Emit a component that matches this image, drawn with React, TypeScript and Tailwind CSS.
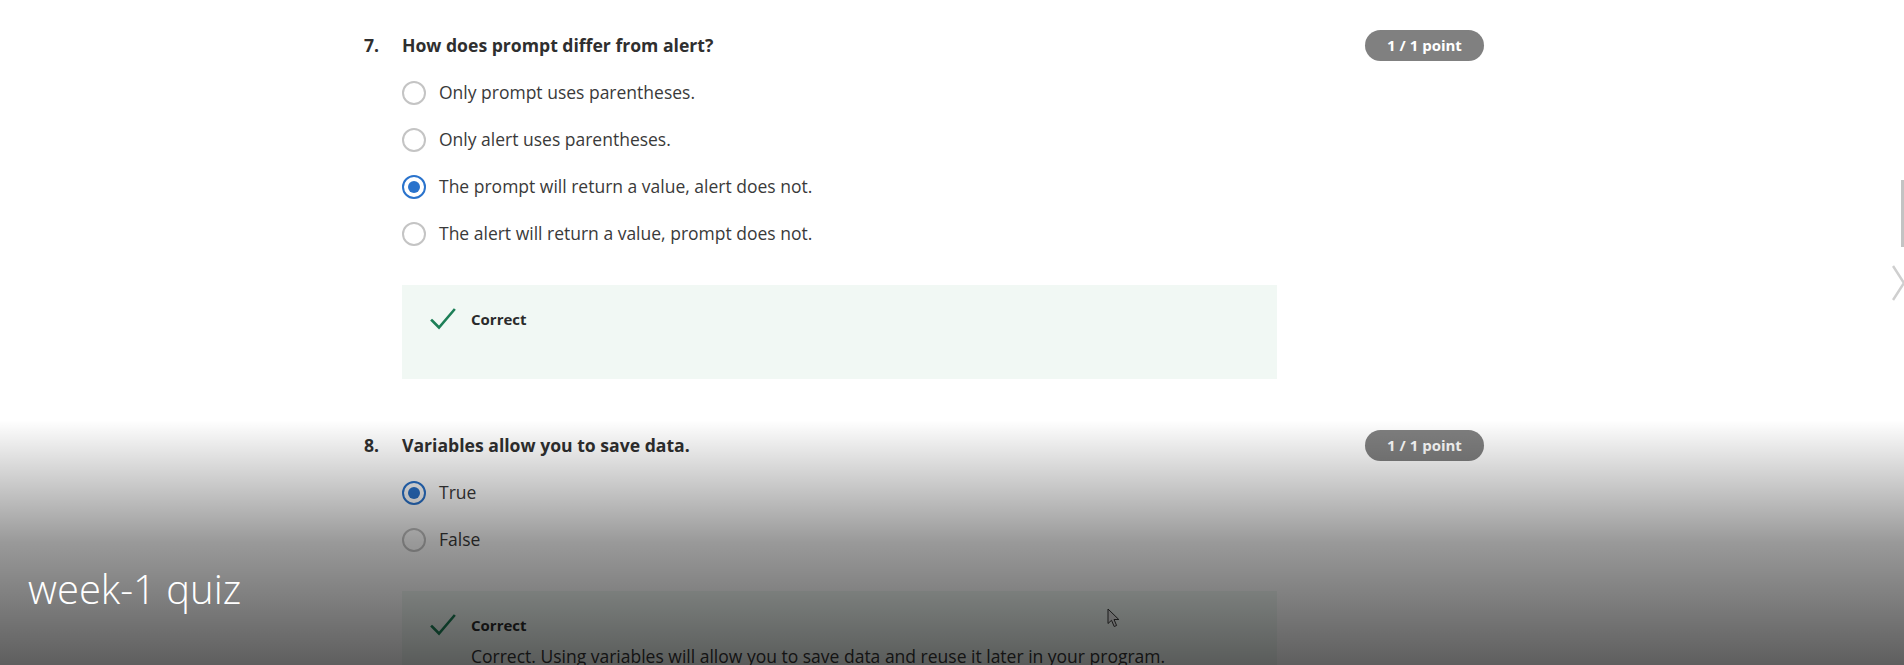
import React from 'react'

type Opt = { label: string; checked?: boolean }

function Radio({ checked }: { checked?: boolean }) {
  if (checked) {
    return (
      <span className="flex h-[24px] w-[24px] shrink-0 items-center justify-center rounded-full border-[2.5px] border-[#2a73cc] bg-white">
        <span className="h-[12px] w-[12px] rounded-full bg-[#2a73cc]" />
      </span>
    )
  }
  return <span className="h-[24px] w-[24px] shrink-0 rounded-full border-2 border-[#c4c4c4] bg-white" />
}

function Check() {
  return (
    <svg width="26" height="24" viewBox="0 0 26 24" fill="none" className="shrink-0">
      <path d="M2 13.5 L9 20.5 L24 3" stroke="#1d7f57" strokeWidth="2.6" strokeLinecap="square" />
    </svg>
  )
}

function Question({
  num,
  title,
  options,
  note,
}: {
  num: string
  title: string
  options: Opt[]
  note?: string
}) {
  return (
    <section className="w-[1120px]">
      <div className="flex h-[31px] items-center justify-between">
        <h3 className="flex items-center text-[17.6px] font-bold text-[#2f2f2f]">
          <span className="w-[38px]">{num}</span>
          <span>{title}</span>
        </h3>
        <span className="flex h-[31px] w-[119px] items-center justify-center rounded-full bg-[#808080] text-[15px] font-bold text-white">
          1 / 1 point
        </span>
      </div>
      <div className="mt-[8px] pl-[38px]">
        {options.map((o) => (
          <label key={o.label} className="flex h-[47px] items-center gap-[13px] text-[17.5px] text-[#3a3a3a]">
            <Radio checked={o.checked} />
            <span>{o.label}</span>
          </label>
        ))}
      </div>
      <div className="ml-[38px] mt-[28px] h-[94px] w-[875px] bg-[#f1f8f4] pl-[28px] pt-[22px]">
        <div className="flex h-[24px] items-center gap-[15px]">
          <Check />
          <span className="text-[15px] font-bold text-[#2b2b2b]">Correct</span>
        </div>
        {note && <p className="mt-[6px] pl-[41px] text-[17.5px] leading-[27px] text-[#333]">{note}</p>}
      </div>
    </section>
  )
}

export default function App() {
  return (
    <div
      className="relative h-[665px] w-[1904px] overflow-hidden bg-white"
      style={{ fontFamily: '"Open Sans", "Noto Sans", sans-serif' }}
    >
      <main className="flex flex-col gap-[51px] pl-[364px] pt-[30px]">
        <Question
          num="7."
          title="How does prompt differ from alert?"
          options={[
            { label: 'Only prompt uses parentheses.' },
            { label: 'Only alert uses parentheses.' },
            { label: 'The prompt will return a value, alert does not.', checked: true },
            { label: 'The alert will return a value, prompt does not.' },
          ]}
        />
        <Question
          num="8."
          title="Variables allow you to save data."
          options={[{ label: 'True', checked: true }, { label: 'False' }]}
          note="Correct. Using variables will allow you to save data and reuse it later in your program."
        />
      </main>

      {/* scrollbar thumb + next arrow on the right edge */}
      <div className="absolute right-0 top-[180px] h-[67px] w-[3px] bg-[#c3c3c3]" />
      <svg className="absolute right-0 top-[264px]" width="12" height="38" viewBox="0 0 12 38" fill="none">
        <path d="M1 2 L12 19 L1 36" stroke="#cfcfcf" strokeWidth="2.5" />
      </svg>

      {/* video title overlay */}
      <div className="absolute inset-x-0 bottom-0 h-[245px] bg-gradient-to-b from-transparent via-black/40 to-black/[0.63]" />
      <div className="absolute left-[28px] top-[559px] text-[40px] font-light leading-[60px] text-white">week-1 quiz</div>
      <svg className="absolute left-[1107px] top-[608px]" width="14" height="20" viewBox="0 0 14 20" fill="none">
        <path
          d="M1 1 L1 15.5 L4.5 12.3 L7.2 18.5 L9.6 17.5 L7 11.5 L11.8 11.5 Z"
          fill="#6a6a6a"
          stroke="#1a1a1a"
          strokeWidth="1"
          strokeLinejoin="round"
        />
      </svg>
    </div>
  )
}
